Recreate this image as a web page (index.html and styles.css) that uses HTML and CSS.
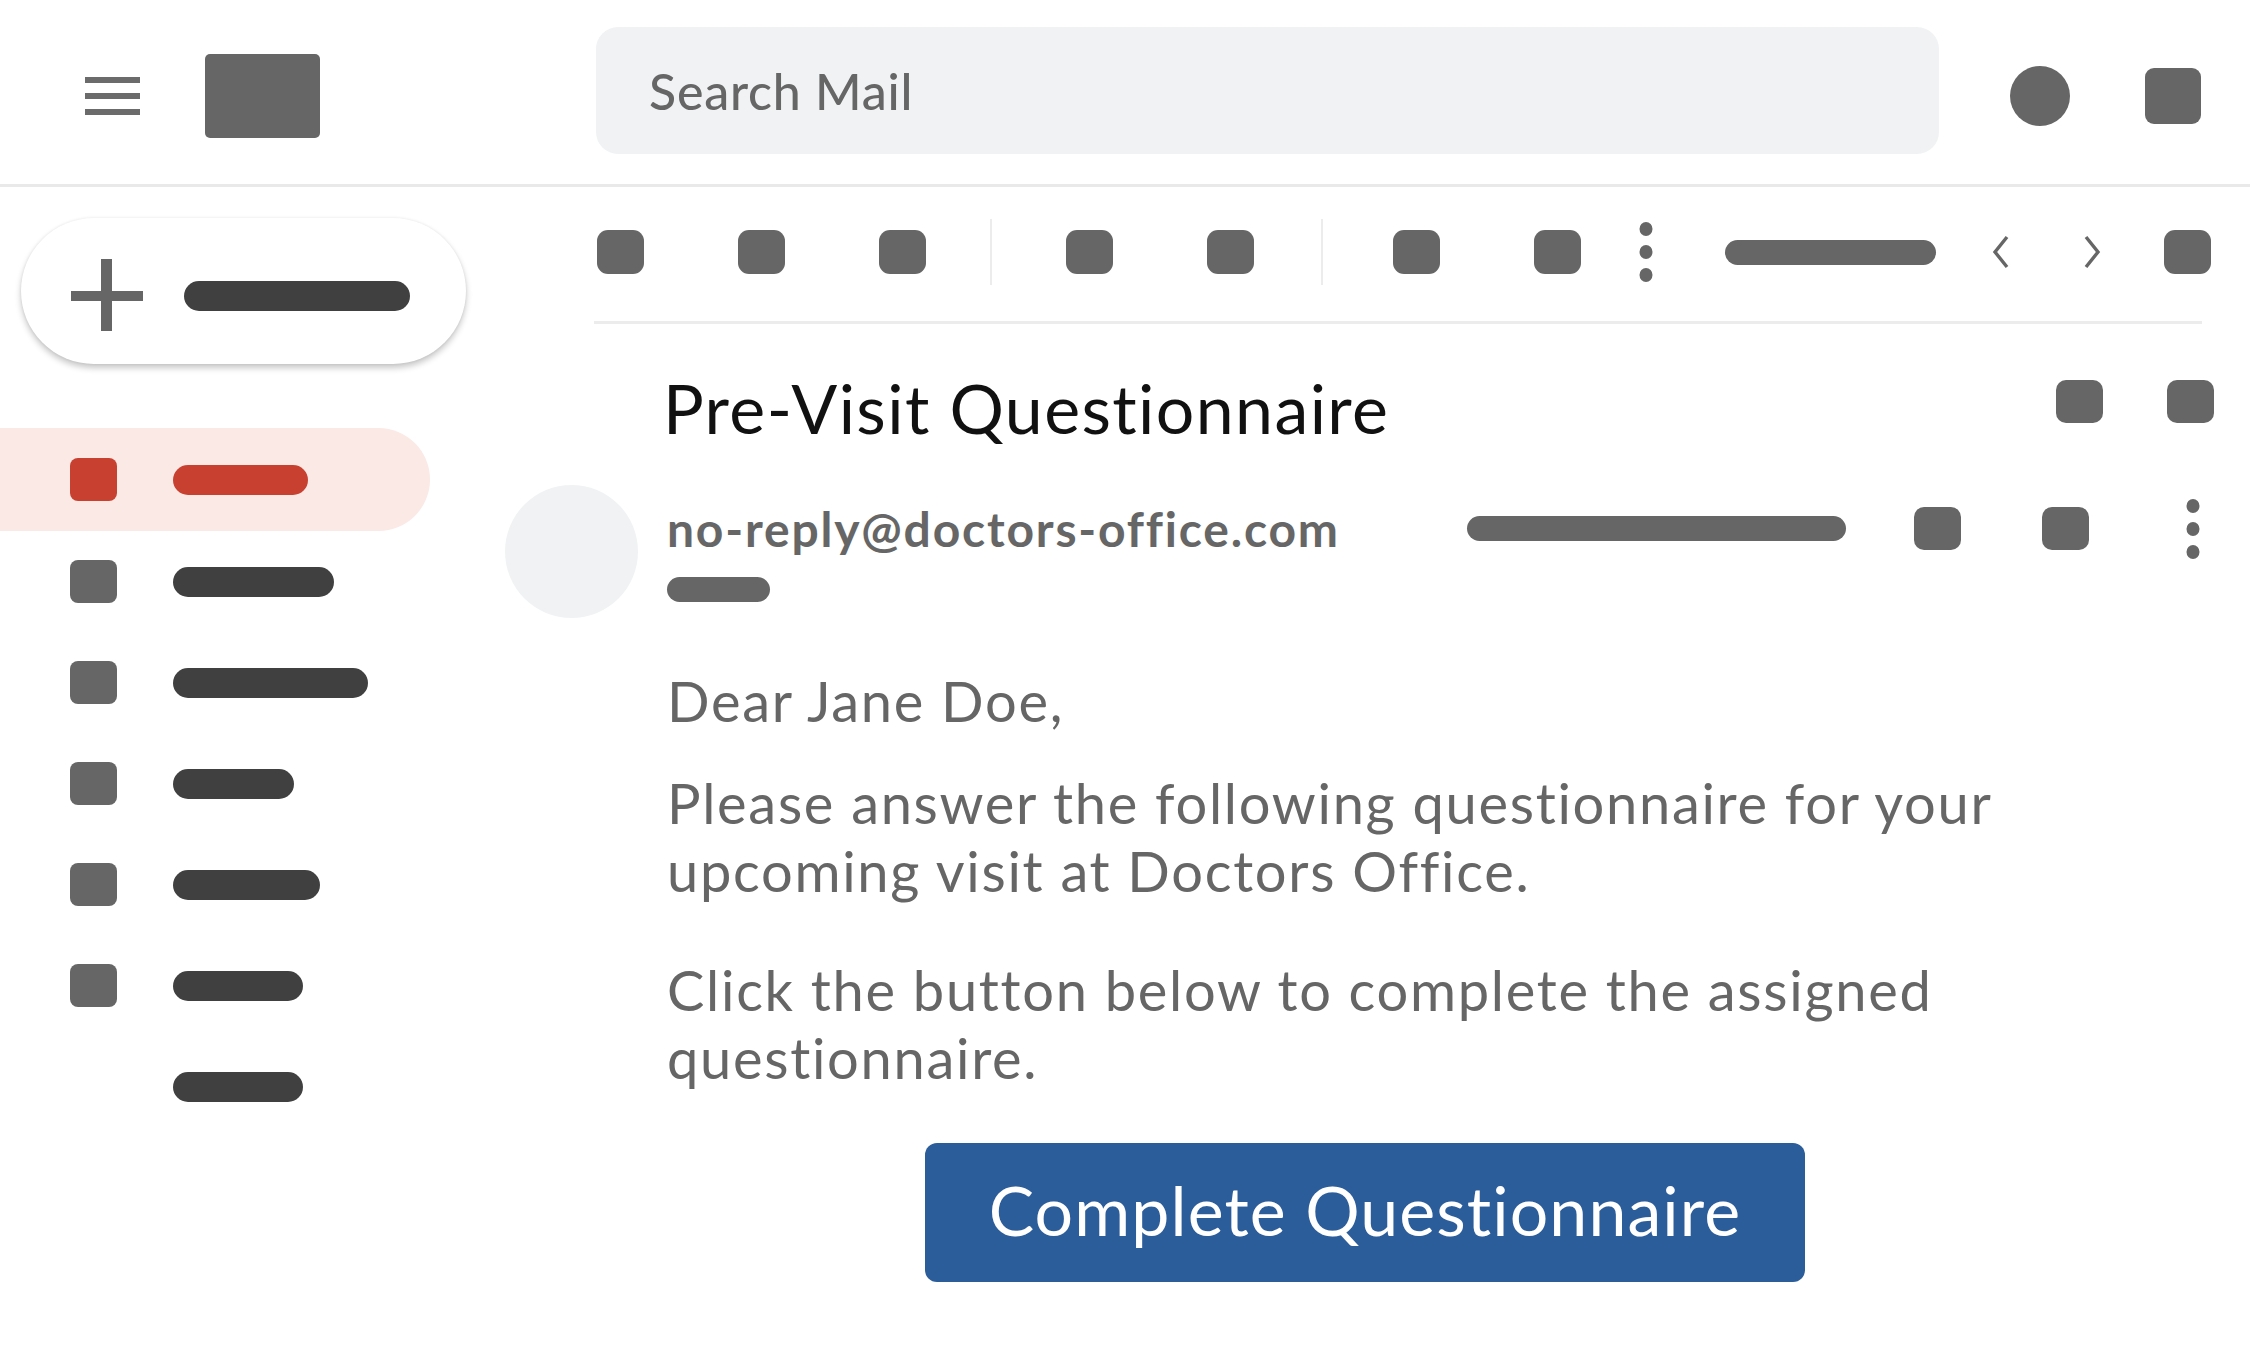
FILE: index.html
```html
<!DOCTYPE html>
<html lang="en">
<head>
<meta charset="utf-8">
<title>Mail</title>
<link rel="stylesheet" href="styles.css">
</head>
<body>
<header class="topbar">
  <div class="hamburger"><span></span><span></span><span></span></div>
  <div class="logo"></div>
  <div class="search">Search Mail</div>
  <div class="top-circle"></div>
  <div class="top-square"></div>
</header>
<div class="main">
  <aside class="sidebar">
    <div class="compose">
      <svg class="plus" width="72" height="72" viewBox="0 0 72 72"><rect x="30" y="0" width="11" height="72" fill="#666"/><rect x="0" y="32" width="72" height="10" fill="#666"/></svg>
      <span class="compose-bar"></span>
    </div>
    <nav class="nav">
      <div class="nav-item active"><span class="nav-ico"></span><span class="nav-bar w135"></span></div>
      <div class="nav-item"><span class="nav-ico"></span><span class="nav-bar w161"></span></div>
      <div class="nav-item"><span class="nav-ico"></span><span class="nav-bar w195"></span></div>
      <div class="nav-item"><span class="nav-ico"></span><span class="nav-bar w121"></span></div>
      <div class="nav-item"><span class="nav-ico"></span><span class="nav-bar w147"></span></div>
      <div class="nav-item"><span class="nav-ico"></span><span class="nav-bar w130"></span></div>
      <div class="nav-item"><span class="nav-ico hidden"></span><span class="nav-bar w130"></span></div>
    </nav>
  </aside>
  <section class="content">
    <div class="toolbar">
      <span class="tb-ico"></span>
      <span class="tb-ico gap94"></span>
      <span class="tb-ico gap94"></span>
      <span class="sep sep-a"></span>
      <span class="tb-ico"></span>
      <span class="tb-ico gap94"></span>
      <span class="sep sep-b"></span>
      <span class="tb-ico"></span>
      <span class="tb-ico gap94"></span>
      <svg class="tb-dots" width="14" height="60" viewBox="0 0 14 60"><ellipse cx="7" cy="7" rx="6.5" ry="7" fill="#666"/><ellipse cx="7" cy="30" rx="6.5" ry="7" fill="#666"/><ellipse cx="7" cy="53" rx="6.5" ry="7" fill="#666"/></svg>
      <span class="tb-bar"></span>
      <svg class="chev chev-l" width="20" height="34" viewBox="0 0 20 34"><polyline points="16,2 4,17 16,32" fill="none" stroke="#666" stroke-width="3.4"/></svg>
      <svg class="chev chev-r" width="20" height="34" viewBox="0 0 20 34"><polyline points="4,2 16,17 4,32" fill="none" stroke="#666" stroke-width="3.4"/></svg>
      <span class="tb-ico tb-last"></span>
    </div>
    <article class="mail">
      <div class="subject-row">
        <h1 class="subject">Pre-Visit Questionnaire</h1>
        <div class="subject-actions"><span class="act-ico"></span><span class="act-ico"></span></div>
      </div>
      <div class="sender-row">
        <div class="avatar"></div>
        <div class="sender-main">
          <div class="sender-line">
            <span class="sender">no-reply@doctors-office.com</span>
            <span class="meta-bar"></span>
            <span class="act-ico sq-a"></span>
            <span class="act-ico sq-b"></span>
            <svg class="meta-dots" width="14" height="60" viewBox="0 0 14 60"><ellipse cx="7" cy="7" rx="6.5" ry="7" fill="#666"/><ellipse cx="7" cy="30" rx="6.5" ry="7" fill="#666"/><ellipse cx="7" cy="53" rx="6.5" ry="7" fill="#666"/></svg>
          </div>
          <span class="to-bar"></span>
        </div>
      </div>
      <div class="mail-body">
        <p class="greet">Dear Jane Doe,</p>
        <p class="para-1">Please answer the following questionnaire for your upcoming visit at Doctors Office.</p>
        <p class="para-2">Click the button below to complete the assigned questionnaire.</p>
        <div class="cta-wrap"><a class="cta">Complete Questionnaire</a></div>
      </div>
    </article>
  </section>
</div>
</body>
</html>
```
FILE: styles.css
```css
html, body {
  margin: 0;
  padding: 0;
}
body {
  width: 2250px;
  height: 1350px;
  overflow: hidden;
  background: #ffffff;
  font-family: "Lato", "Open Sans", sans-serif;
  color: #666666;
}

/* ---------- top bar ---------- */
.topbar {
  display: flex;
  align-items: center;
  height: 187px;
  box-sizing: border-box;
  padding-top: 8px;
  border-bottom: 3px solid #e9e9e9;
}
.hamburger {
  margin-left: 85px;
  width: 55px;
  height: 38px;
  display: flex;
  flex-direction: column;
  justify-content: space-between;
}
.hamburger span {
  display: block;
  height: 6px;
  background: #6b6b6b;
}
.logo {
  margin-left: 65px;
  width: 115px;
  height: 84px;
  border-radius: 5px;
  background: #666666;
}
.search {
  align-self: flex-start;
  margin-top: 19px;
  margin-left: 276px;
  width: 1343px;
  height: 127px;
  box-sizing: border-box;
  padding-left: 53px;
  display: flex;
  align-items: center;
  border-radius: 22px;
  background: #f0f2f4;
  font-size: 50px;
  font-weight: 500;
  letter-spacing: 0.8px;
  color: #666666;
}
.top-circle {
  margin-left: 71px;
  width: 60px;
  height: 60px;
  border-radius: 50%;
  background: #666666;
}
.top-square {
  margin-left: 75px;
  width: 56px;
  height: 56px;
  border-radius: 9px;
  background: #666666;
}

/* ---------- layout ---------- */
.main {
  display: flex;
}
.sidebar {
  width: 505px;
  flex: none;
}
.content {
  flex: 1;
  min-width: 0;
  padding-right: 36px;
}

/* ---------- sidebar ---------- */
.compose {
  margin: 31px 0 0 21px;
  width: 445px;
  height: 146px;
  box-sizing: border-box;
  padding: 8px 0 0 50px;
  display: flex;
  align-items: center;
  border-radius: 73px;
  background: #ffffff;
  box-shadow: 0 4px 6px rgba(0, 0, 0, 0.22), 0 0 3px rgba(0, 0, 0, 0.07);
}
.plus {
  flex: none;
}
.compose-bar {
  margin-left: 41px;
  margin-top: 2px;
  width: 226px;
  height: 30px;
  border-radius: 15px;
  background: #404040;
}
.nav {
  margin-top: 64px;
}
.nav-item {
  display: flex;
  align-items: center;
  width: 430px;
  height: 101px;
  box-sizing: border-box;
  padding-left: 70px;
}
.nav-item.active {
  height: 103px;
  background: #fbe9e6;
  border-radius: 0 52px 52px 0;
}
.nav-ico {
  width: 47px;
  height: 43px;
  border-radius: 8px;
  background: #666666;
  flex: none;
}
.nav-ico.hidden {
  visibility: hidden;
}
.nav-bar {
  margin-left: 56px;
  height: 30px;
  border-radius: 15px;
  background: #404040;
}
.active .nav-ico,
.active .nav-bar {
  background: #c8402f;
}
.w135 { width: 135px; }
.w161 { width: 161px; }
.w195 { width: 195px; }
.w121 { width: 121px; }
.w147 { width: 147px; }
.w130 { width: 130px; }

/* ---------- toolbar ---------- */
.toolbar {
  margin-left: 89px;
  margin-right: 12px;
  height: 137px;
  box-sizing: border-box;
  padding: 0 0 4px 3px;
  display: flex;
  align-items: center;
  border-bottom: 3px solid #ececec;
}
.tb-ico {
  flex: none;
  width: 47px;
  height: 44px;
  border-radius: 11px;
  background: #666666;
}
.gap94 { margin-left: 94px; }
.sep {
  flex: none;
  width: 2px;
  height: 66px;
  background: #ececec;
}
.sep-a { margin: 0 74px 0 64px; }
.sep-b { margin: 0 70px 0 67px; }
.tb-dots {
  flex: none;
  margin-left: 58px;
}
.tb-bar {
  flex: none;
  margin-left: 72px;
  width: 211px;
  height: 25px;
  border-radius: 13px;
  background: #666666;
}
.chev { flex: none; }
.chev-l { margin-left: 55px; }
.chev-r { margin-left: 71px; }
.tb-last { margin-left: 62px; }

/* ---------- mail ---------- */
.mail {
  margin-top: 43px;
}
.subject-row {
  display: flex;
  align-items: flex-start;
  padding-left: 158px;
}
.subject {
  margin: 0;
  font-size: 68px;
  font-weight: 400;
  letter-spacing: 1.4px;
  line-height: 82px;
  color: #111111;
}
.subject-actions {
  margin-left: auto;
  margin-top: 13px;
  display: flex;
  gap: 64px;
}
.act-ico {
  flex: none;
  width: 47px;
  height: 43px;
  border-radius: 10px;
  background: #666666;
}
.sender-row {
  display: flex;
  margin-top: 36px;
}
.avatar {
  flex: none;
  width: 133px;
  height: 133px;
  border-radius: 50%;
  background: #f0f2f4;
}
.sender-main {
  flex: 1;
  margin-left: 29px;
  padding-top: 17px;
}
.sender-line {
  display: flex;
  align-items: center;
  height: 53px;
}
.sender {
  font-size: 48px;
  font-weight: 700;
  letter-spacing: 1.8px;
  line-height: 53px;
  color: #666666;
}
.meta-bar {
  margin-left: auto;
  width: 379px;
  height: 25px;
  border-radius: 13px;
  background: #666666;
}
.sq-a { margin-left: 68px; }
.sq-b { margin-left: 81px; }
.meta-dots {
  flex: none;
  margin-left: 97px;
  margin-right: 14px;
}
.to-bar {
  display: block;
  margin-top: 22px;
  width: 103px;
  height: 25px;
  border-radius: 13px;
  background: #666666;
}
.mail-body {
  margin-left: 162px;
  width: 1396px;
  font-size: 56px;
  letter-spacing: 1.7px;
  line-height: 68px;
  color: #666666;
}
.mail-body p {
  margin: 0;
}
.greet { margin-top: 49px !important; }
.para-1 { margin-top: 34px !important; }
.para-2 { margin-top: 51px !important; }
.cta-wrap {
  display: flex;
  justify-content: center;
  margin-top: 51px;
}
.cta {
  width: 880px;
  height: 139px;
  box-sizing: border-box;
  padding-bottom: 6px;
  display: flex;
  align-items: center;
  justify-content: center;
  border-radius: 12px;
  background: #2c5d9b;
  color: #ffffff;
  font-size: 68px;
  letter-spacing: 1.1px;
  text-decoration: none;
}
```
